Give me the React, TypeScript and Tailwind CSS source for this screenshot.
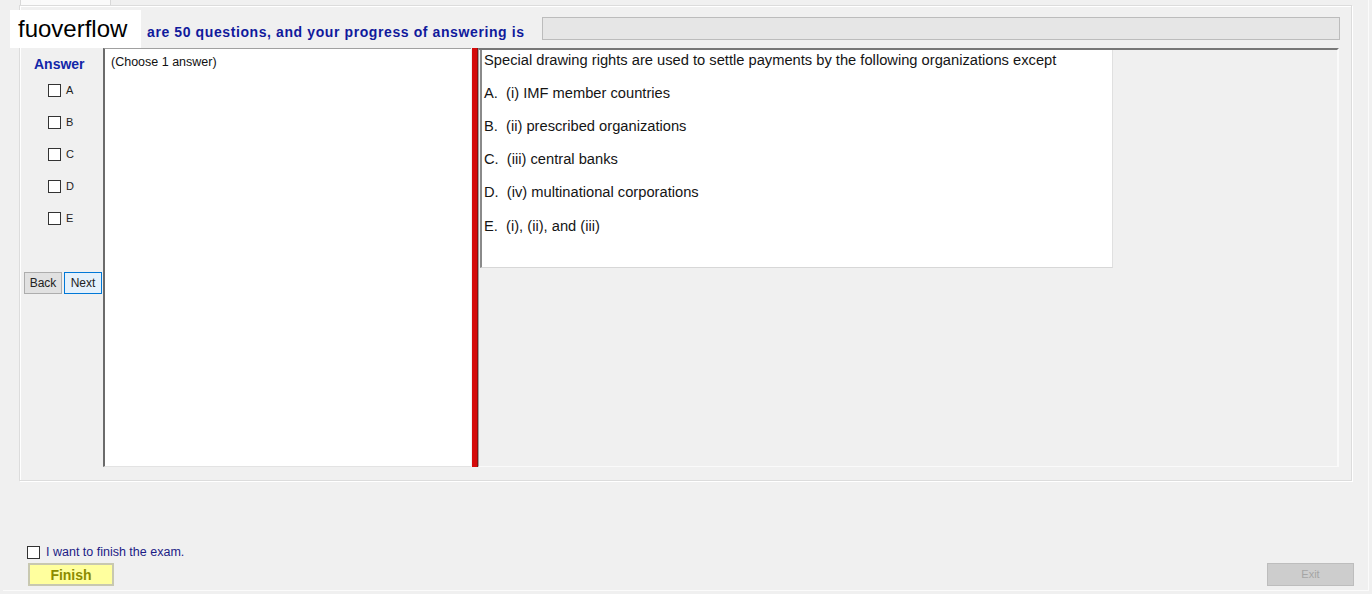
import React from "react";

const font = { fontFamily: '"Liberation Sans", Arial, sans-serif' };

function Box({ className = "" }: { className?: string }) {
  return <div className={`w-[13px] h-[13px] border border-[#333] bg-white ${className}`} />;
}

export default function App() {
  const opts = ["A", "B", "C", "D", "E"];
  const answers = [
    "A.  (i) IMF member countries",
    "B.  (ii) prescribed organizations",
    "C.  (iii) central banks",
    "D.  (iv) multinational corporations",
    "E.  (i), (ii), and (iii)",
  ];
  return (
    <div className="relative w-[1372px] h-[594px] bg-[#f0f0f0] overflow-hidden" style={font}>
      <div className="ml-[3px] w-[1366px] h-[591px] border-r border-b border-[#fbfbfb] flex flex-col">
        {/* tab stub */}
        <div className="h-[5px] flex">
          <div className="ml-[17px] w-[91px] h-[5px] bg-[#fafafa] border-l border-r border-[#d8d8d8]" />
        </div>
        {/* group box */}
        <div className="ml-[16px] w-[1333px] h-[476px] border border-[#dcdcdc] shadow-[inset_1px_1px_0_#ffffff,1px_1px_0_#ffffff] flex flex-col">
          <div className="mt-[11px] h-[23px] flex items-center">
            <div className="ml-[127px] mt-[8px] text-[14px] tracking-[0.6px] font-bold text-[#101a9c] whitespace-nowrap">
              are 50 questions, and your progress of answering is
            </div>
            <div className="ml-auto mr-[11px] w-[798px] h-[23px] bg-[#e6e6e6] border border-[#bcbcbc]" />
          </div>
          <div className="mt-[8px] h-[419px] flex pl-[4px]">
            {/* left answer column */}
            <div className="w-[79px] flex flex-col">
              <div className="mt-[6px] pl-[10px] text-[14px] font-bold text-[#1226a8]">Answer</div>
              <div className="mt-[9px] flex flex-col gap-[19px] pl-[24px]">
                {opts.map((o) => (
                  <div key={o} className="flex items-center h-[13px]">
                    <Box />
                    <span className="ml-[5px] mb-[1px] text-[11px] text-[#222] leading-none">{o}</span>
                  </div>
                ))}
              </div>
              <div className="mt-[47px] flex gap-[2px]">
                <button className="w-[38px] h-[22px] bg-[#e1e1e1] border border-[#adadad] text-[12px] text-[#222]">Back</button>
                <button className="w-[38px] h-[22px] bg-[#e5f1fb] border border-[#0078d7] text-[12px] text-[#222]">Next</button>
              </div>
            </div>
            {/* choose panel */}
            <div className="w-[368px] h-full bg-white border-l-2 border-t border-l-[#6b6b6b] border-t-[#a0a0a0] border-b border-b-[#e3e3e3] pl-[6px] pt-[4px]">
              <div className="text-[12.5px] text-[#111]">(Choose 1 answer)</div>
            </div>
            {/* red splitter */}
            <div className="ml-[1px] w-[6px] h-full bg-[#d40a0a] border-r border-[#8c1010]" />
            {/* right panel */}
            <div className="w-[861px] h-full border-t-2 border-l border-t-[#777] border-l-[#a0a0a0] border-r-2 border-r-[#fafafa] border-b border-b-[#fafafa] pl-[1px]">
              <div className="w-[633px] h-[218px] bg-white border-l-2 border-l-[#8a8a8a] border-b border-b-[#d7d7d7] border-r border-r-[#e0e0e0] pl-[2px] text-[14.7px] text-[#151515]">
                <div className="h-[20px] leading-[20px]">Special drawing rights are used to settle payments by the following organizations except</div>
                {answers.map((a, i) => (
                  <div key={i} className={`leading-[20px] whitespace-pre ${i === 4 ? "mt-[14px]" : "mt-[13px]"}`}>{a}</div>
                ))}
              </div>
            </div>
          </div>
        </div>
        {/* bottom */}
        <div className="mt-[62px] ml-[24px] flex items-center">
          <Box />
          <span className="ml-[6px] text-[12.5px] text-[#1c1c86]">I want to finish the exam.</span>
        </div>
        <div className="mt-[1px] flex items-center">
          <button className="ml-[25px] w-[86px] h-[23px] bg-[#ffff9e] border-2 border-[#c8c8b0] text-[14px] font-bold text-[#8c8c00]">Finish</button>
          <button className="ml-auto mr-[14px] w-[87px] h-[23px] bg-[#cdcdcd] border border-[#bdbdbd] text-[11px] text-[#a5a5a5]">Exit</button>
        </div>
      </div>
      {/* watermark */}
      <div className="absolute left-[10px] top-[10px] w-[131px] h-[38px] bg-white flex items-center pl-[8px] text-[24px] text-black">
        fuoverflow
      </div>
    </div>
  );
}
